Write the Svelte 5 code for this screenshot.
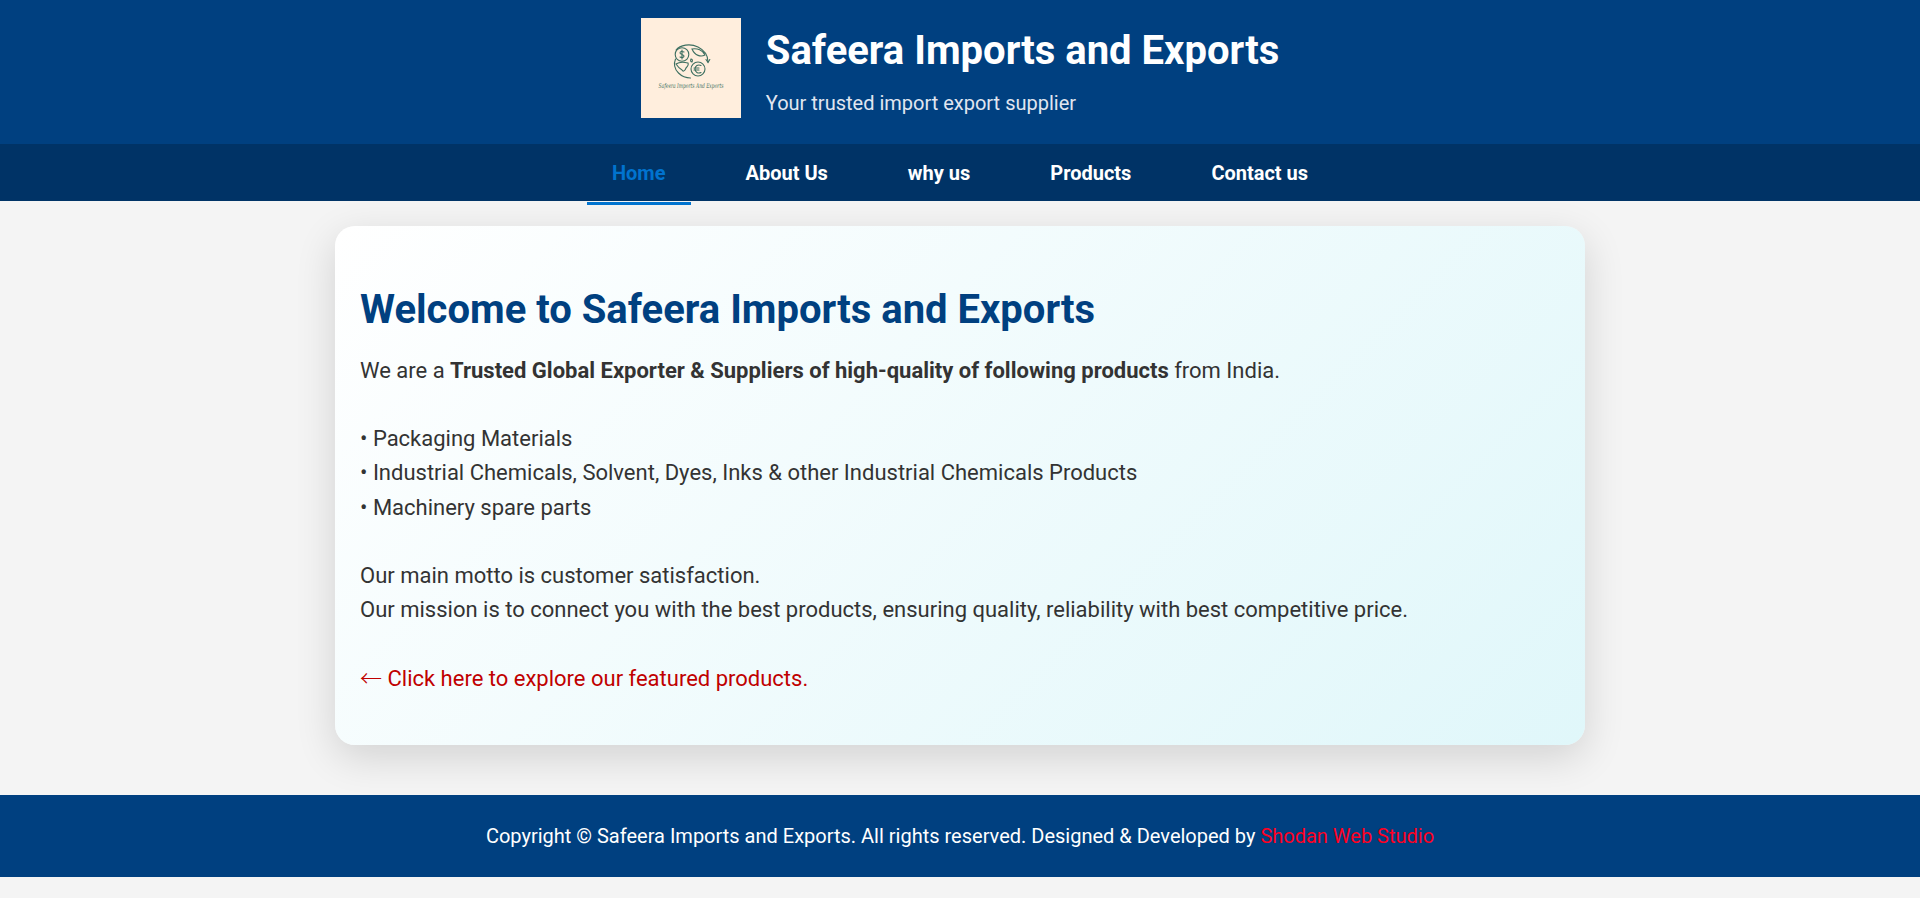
<script>
  const links = ['Home', 'About Us', 'why us', 'Products', 'Contact us'];
  const products = [
    'Packaging Materials',
    'Industrial Chemicals, Solvent, Dyes, Inks & other Industrial Chemicals Products',
    'Machinery spare parts'
  ];
</script>

<header class="top">
  <div class="brand">
    <svg class="logo" viewBox="0 0 100 100" role="img" aria-label="Safeera Imports and Exports logo">
      <rect width="100" height="100" fill="#ffeedd" />
      <g fill="none" stroke="#3d6f60" stroke-width="1.100" stroke-linecap="round">
        <circle cx="41" cy="36.500" r="6.800" />
        <circle cx="57" cy="51" r="7" />
        <path d="M35 32c4-5 14-7 22-3 6 3 10 8 10 15" />
        <path d="M65 41.500l2 3 1.800-3" />
        <path d="M34.500 41c-2 5-1 10 3 14 4 4 8 5 12 5" />
        <path d="M51 31c5-1 11 1 13 6-4 2-10 1-13-6z" />
        <path d="M35 46c3-2 8-2 12-1 1 2-1 4-2 5-1 3-3 4-4 2-2-1-4-3-6-6z" />
        <path d="M50 41c1 0 2 1 1 3-1 0-2-1-1-3z" />
        <path d="M41 32v9M43 34c-2-1-4-.5-4 1s4 1.500 4 3-2 2-4 1" />
        <path d="M60 47.500c-3-1.500-6 .5-6 3.500s3 5 6 3.500M53 50h5M53 52h5" />
      </g>
      <text class="logo-text" x="50" y="46.500" text-anchor="middle" transform="scale(1 1.5)">Safeera Imports And Exports</text>
    </svg>
    <div class="brand-text">
      <h1>Safeera Imports and Exports</h1>
      <p>Your trusted import export supplier</p>
    </div>
  </div>
</header>

<nav>
  {#each links as link, i}
    <a href="#top" class:active={i === 0}>{link}</a>
  {/each}
</nav>

<main>
  <section class="card">
    <h2>Welcome to Safeera Imports and Exports</h2>
    <p>We are a <strong>Trusted Global Exporter &amp; Suppliers of high-quality of following products</strong> from India.</p>
    <ul>
      {#each products as product}
        <li>• {product}</li>
      {/each}
    </ul>
    <p>Our main motto is customer satisfaction.<br />Our mission is to connect you with the best products, ensuring quality, reliability with best competitive price.</p>
    <a class="explore" href="#top"><span class="arrow">←</span> Click here to explore our featured products.</a>
  </section>
</main>

<footer>
  Copyright © Safeera Imports and Exports. All rights reserved. Designed &amp; Developed by <a href="#top">Shodan Web Studio</a>
</footer>
<div class="tail"></div>

<style>
  :global(body) {
    background: #f4f4f4;
    font-family: Roboto, "Liberation Sans", sans-serif;
    color: #333;
  }

  .top {
    background: #004080;
    color: #fff;
    padding: 18px 0 26px;
  }

  .brand {
    display: flex;
    justify-content: center;
    align-items: center;
    gap: 25px;
  }

  .logo {
    width: 100px;
    height: 100px;
    flex: none;
  }

  .logo-text {
    font-family: "DejaVu Serif", serif;
    font-style: italic;
    font-size: 4.400px;
    fill: #3d6f60;
  }

  .brand-text {
    padding-top: 5px;
  }

  h1 {
    margin: 0;
    font-size: 40px;
    font-weight: 700;
    line-height: 47px;
  }

  .brand-text p {
    margin: 17px 0 0;
    font-size: 20px;
    line-height: 24px;
    color: #e0e6f0;
  }

  nav {
    display: flex;
    justify-content: center;
    background: #003366;
    height: 57px;
  }

  nav a {
    height: 61px;
    box-sizing: border-box;
    padding: 0 25px;
    line-height: 58px;
    font-size: 20px;
    font-weight: 700;
    color: #fff;
    text-decoration: none;
    border-bottom: 3px solid transparent;
  }

  nav a + a {
    margin-left: 30px;
  }

  nav a.active {
    padding-right: 26px;
    margin-right: -1px;
    color: #0073cf;
    border-bottom-color: #0073cf;
  }

  main {
    padding: 25px 0 50px;
  }

  .card {
    width: 1250px;
    height: 519px;
    box-sizing: border-box;
    margin: 0 auto;
    padding: 60px 25px 0;
    border-radius: 20px;
    background: linear-gradient(135deg, #ffffff, #e0f7fa);
    box-shadow: 0 12px 40px rgba(0, 0, 0, 0.14);
    font-size: 22px;
    line-height: 34.200px;
    color: #333;
  }

  h2 {
    margin: 0 0 20.800px;
    font-size: 40px;
    line-height: 47px;
    font-weight: 700;
    color: #004080;
  }

  .card p {
    margin: 0;
  }

  ul {
    list-style: none;
    margin: 34.200px 0;
    padding: 0;
  }

  .explore {
    display: block;
    margin-top: 34.200px;
    color: #c00000;
    text-decoration: none;
  }

  .arrow {
    font-family: "Noto Sans CJK SC", sans-serif;
    font-weight: 300;
    line-height: 0;
  }

  footer {
    background: #004080;
    color: #fff;
    text-align: center;
    padding: 29px 0;
    font-size: 20px;
    line-height: 24px;
  }

  footer a {
    color: #ff0022;
    text-decoration: none;
  }

  .tail {
    height: 21px;
  }
</style>
